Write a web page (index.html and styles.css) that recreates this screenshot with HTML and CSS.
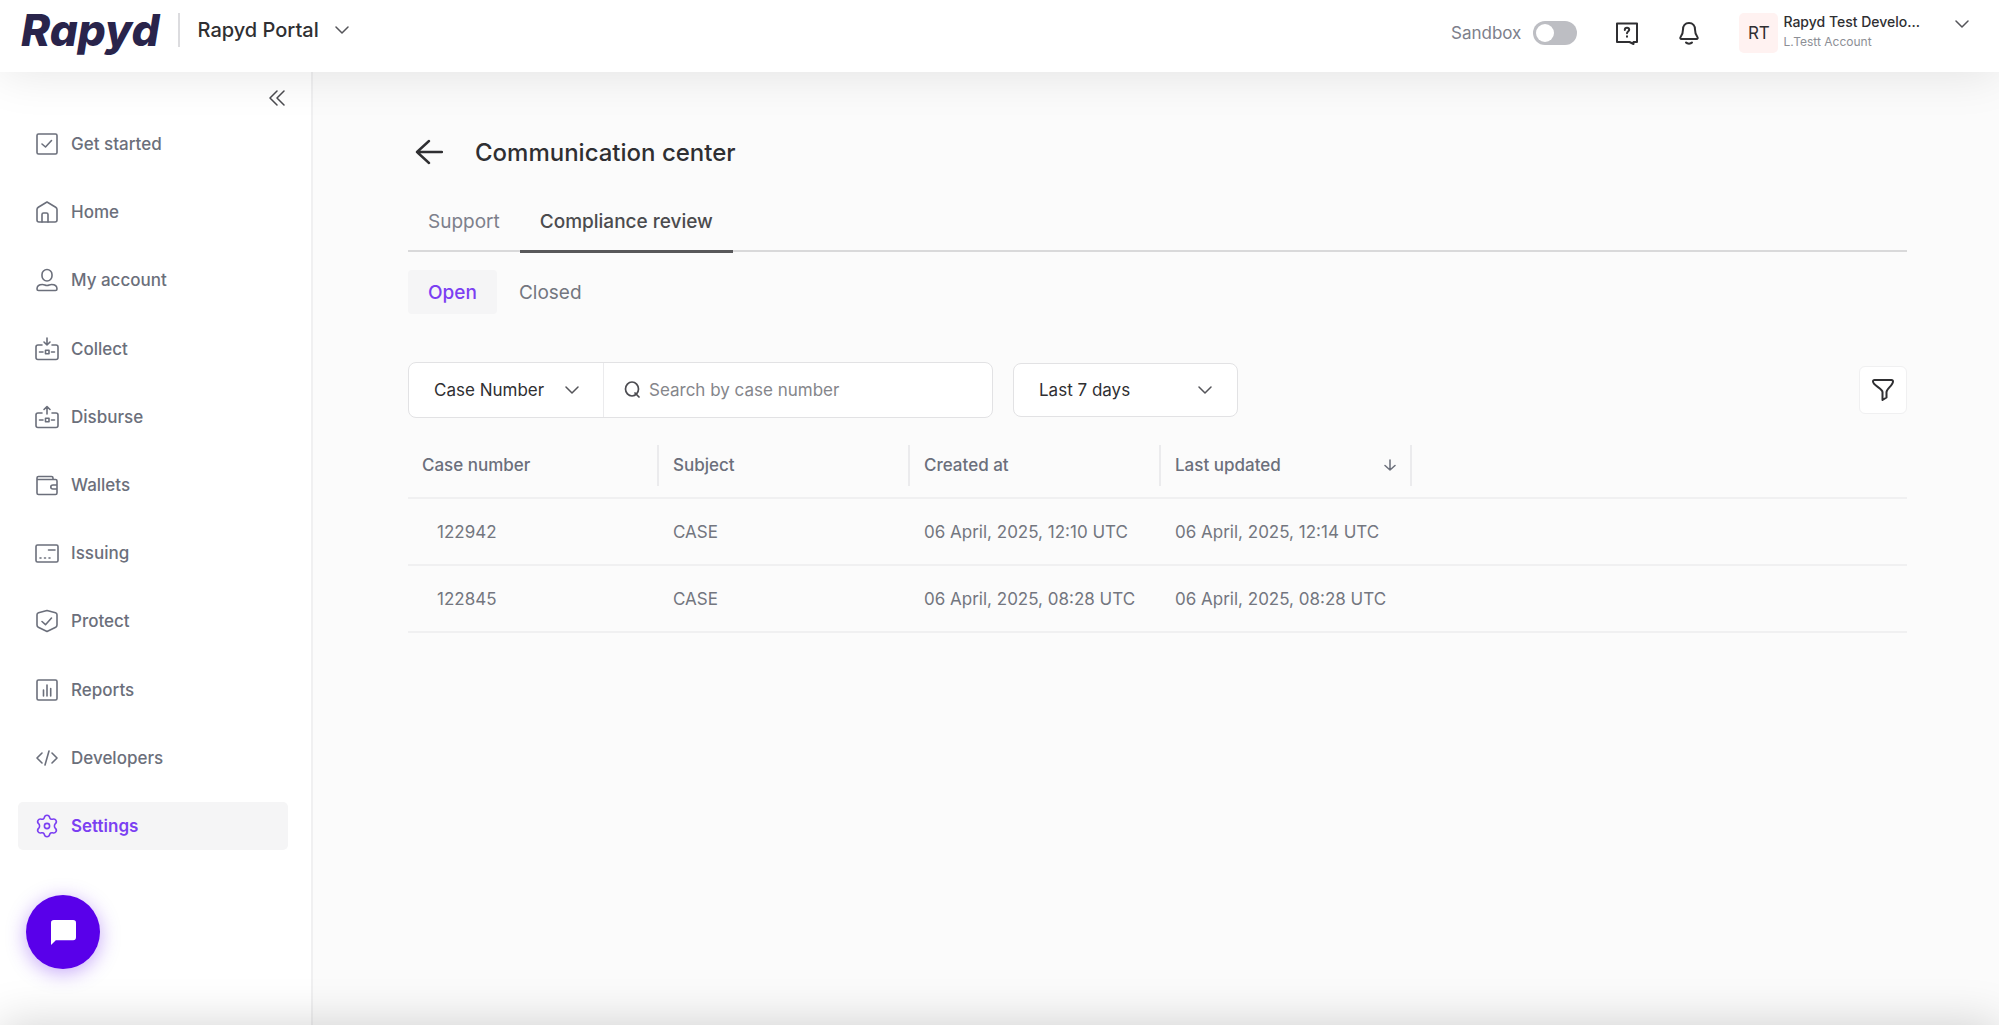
FILE: index.html
```
<!DOCTYPE html>
<html lang="en">
<head>
  <meta charset="UTF-8" />
  <meta name="viewport" content="width=device-width, initial-scale=1.0"/>
  <title>Rapyd Portal - Communication center</title>
  <link rel="stylesheet" href="styles.css">
</head>

<body>
  <header class="topbar">
    <a class="logo" href="#">Rapyd</a>
    <button class="portal" type="button">
      Rapyd Portal
      <svg class="chevron" viewBox="0 0 14 8"><path d="M1 1l6 6 6-6"/></svg>
    </button>

    <div class="tools">
      <label class="sandbox">Sandbox <input class="switch" type="checkbox" role="switch"></label>
      <button class="tool" type="button" aria-label="Help">
        <svg class="icon" viewBox="0 0 24 24"><path d="M2 2.500h20v18.500h-3.500v2l-4-2H2z"/><path d="M9.800 9c0-1.500 1-2.200 2.200-2.200s2.200.8 2.200 2c0 1.600-2.200 1.700-2.200 3.400M12 15.200v.6"/></svg>
      </button>
      <button class="tool" type="button" aria-label="Notifications">
        <svg class="icon" viewBox="0 0 24 24"><path d="M12 2c-4 0-6 3-6 6.500 0 4-.8 5.500-2.400 7.500-.7 1-.3 2 .9 2h15c1.200 0 1.600-1 .9-2C18.800 14 18 12.500 18 8.500 18 5 16 2 12 2z"/><path d="M9 21.500c1.300 1.500 4.700 1.500 6 0"/></svg>
      </button>
      <button class="account" type="button">
        <span class="avatar">RT</span>
        <span class="who">
          <span class="name">Rapyd Test Develo...</span>
          <span class="org">L.Testt Account</span>
        </span>
        <svg class="chevron" viewBox="0 0 14 8"><path d="M1 1l6 6 6-6"/></svg>
      </button>
    </div>
  </header>

  <div class="layout">
    <aside class="sidebar">
      <button class="collapse" type="button" aria-label="Collapse menu">
        <svg viewBox="0 0 16 16"><path d="M8 1L1 8l7 7M15 1L8 8l7 7"/></svg>
      </button>
      <nav class="menu">
        <a href="#"><svg class="icon" viewBox="0 0 24 24"><rect x="2" y="2" width="20" height="20" rx="1.500"/><path d="M7 12l3.500 3L16.500 8.500"/></svg>Get started</a>
        <a href="#"><svg class="icon" viewBox="0 0 24 24"><path d="M2 9.500c0-1 .5-1.800 1.300-2.300L12 2l8.700 5.200c.8.500 1.300 1.300 1.300 2.300V20c0 1.200-.8 2-2 2H4c-1.200 0-2-.8-2-2z"/><path d="M7 22v-7.500c0-1 .5-1.500 1.500-1.500h3c1 0 1.500.5 1.500 1.500V22"/></svg>Home</a>
        <a href="#"><svg class="icon" viewBox="0 0 24 24"><rect x="7" y="1.500" width="10" height="11.500" rx="5"/><path d="M3.500 22.500c-1 0-1.500-.6-1.500-1.500 0-3 2.500-4.500 5.500-4.500 2 0 2.500 1 4.500 1s2.500-1 4.500-1c3 0 5.500 1.500 5.500 4.500 0 .9-.5 1.500-1.500 1.500z"/></svg>My account</a>
        <a href="#"><svg class="icon" viewBox="0 0 24 24"><path d="M7 8H3c-1 0-2 .8-2 2v10.500c0 1.200 1 2 2 2h18c1 0 2-.8 2-2V10c0-1.200-1-2-2-2h-4M12 1v7M9 5l3 3 3-3M4.500 15h3.500M16.500 15h3"/><rect x="10.500" y="13.200" width="3.500" height="3.500"/></svg>Collect</a>
        <a href="#"><svg class="icon" viewBox="0 0 24 24"><path d="M7 8H3c-1 0-2 .8-2 2v10.500c0 1.200 1 2 2 2h18c1 0 2-.8 2-2V10c0-1.200-1-2-2-2h-4M12 9V1.500M9 4.500l3-3 3 3M4.500 15h3.500M16.500 15h3"/><rect x="10.500" y="13.200" width="3.500" height="3.500"/></svg>Disburse</a>
        <a href="#"><svg class="icon" viewBox="0 0 24 24"><path d="M2 6.500V20c0 1 .6 1.500 1.500 1.500h17c.9 0 1.500-.5 1.500-1.500V8c0-1-.6-1.500-1.500-1.500zM2 6.500V5c0-1 .6-1.500 1.500-1.500h13c1 0 1.500.5 1.500 1.500v1.500M22 12h-4c-1.500 0-2.200.8-2.200 2s.7 2 2.200 2h4"/></svg>Wallets</a>
        <a href="#"><svg class="icon" viewBox="0 0 24 24"><rect x="1" y="4" width="22" height="17" rx="1.500"/><path d="M13.500 9H20M5 17h1M9.500 17h1M14 17h1"/></svg>Issuing</a>
        <a href="#"><svg class="icon" viewBox="0 0 24 24"><path d="M12 1.500l8.500 2.300c1 .3 1.500 1 1.500 2V16c0 1-.5 1.700-1.300 2.200L12 22.500l-8.700-4.300C2.500 17.700 2 17 2 16V5.800c0-1 .5-1.700 1.500-2z"/><path d="M7 12.500l3.500 3.200 6-6.700"/></svg>Protect</a>
        <a href="#"><svg class="icon" viewBox="0 0 24 24"><rect x="2" y="2" width="20" height="20" rx="1.500"/><path d="M8.500 18v-6M12 18V7M15.700 18v-7.500"/></svg>Reports</a>
        <a href="#"><svg class="icon" viewBox="0 0 24 24"><path d="M7 7l-5 5 5 5M17 7l5 5-5 5M14 5l-4 14"/></svg>Developers</a>
        <a class="active" href="#"><svg class="icon" viewBox="0 0 24 24"><circle cx="12" cy="12" r="2.600"/><path d="M9.300 3.600C9.600 2 10.600 1.200 12 1.200s2.400.8 2.700 2.400c.3 1.300 1.500 2 2.800 1.600 1.600-.5 2.800-.1 3.500 1.100s.4 2.500-.8 3.600c-1 .9-1 3.300 0 4.200 1.200 1.100 1.500 2.400.8 3.600s-1.900 1.600-3.500 1.100c-1.300-.4-2.500.3-2.800 1.600-.3 1.600-1.300 2.400-2.700 2.400s-2.400-.8-2.700-2.400c-.3-1.300-1.500-2-2.800-1.600-1.600.5-2.800.1-3.500-1.100s-.4-2.500.8-3.600c1-.9 1-3.300 0-4.200C2.600 8.800 2.300 7.500 3 6.300s1.900-1.600 3.500-1.100c1.300.4 2.500-.3 2.800-1.600z"/></svg>Settings</a>
      </nav>
      <button class="chat" type="button" aria-label="Open chat">
        <svg viewBox="0 0 26 26"><path d="M3 0h20q3 0 3 3v15q0 3-3 3H5l-5 5V3q0-3 3-3z"/></svg>
      </button>
    </aside>

    <main class="content">
      <div class="title">
        <button class="back" type="button" aria-label="Back">
          <svg viewBox="0 0 28 26"><path d="M14 2L2 13l12 11M2 13h25"/></svg>
        </button>
        <h1>Communication center</h1>
      </div>

      <nav class="tabs">
        <a href="#">Support</a>
        <a class="current" href="#">Compliance review</a>
      </nav>
      <div class="states">
        <button class="selected" type="button">Open</button>
        <button type="button">Closed</button>
      </div>

      <form class="filters">
        <div class="search">
          <select class="field" aria-label="Search field"><option>Case Number</option></select>
          <svg class="chevron" viewBox="0 0 14 8"><path d="M1 1l6 6 6-6"/></svg>
          <label class="query">
            <svg viewBox="0 0 16 18"><ellipse cx="8" cy="8" rx="6.500" ry="7"/><path d="M11 12l4 4"/></svg>
            <input type="search" placeholder="Search by case number" aria-label="Search by case number">
          </label>
        </div>
        <div class="period">
          <select aria-label="Period"><option>Last 7 days</option></select>
          <svg class="chevron" viewBox="0 0 14 8"><path d="M1 1l6 6 6-6"/></svg>
        </div>
        <button class="filter" type="button" aria-label="Filter">
          <svg class="icon" viewBox="0 0 24 24"><path d="M3.500 2h17c1 0 1.500.7 1.500 1.500 0 4-6.500 7-6.500 10.500v5.500L11.500 22v-8C11.500 10.500 2 7.500 2 3.500 2 2.700 2.500 2 3.500 2z"/></svg>
        </button>
      </form>

      <table class="cases">
        <thead>
          <tr>
            <th><div>Case number</div></th>
            <th><div>Subject</div></th>
            <th><div>Created at</div></th>
            <th><div>Last updated <svg class="sort" viewBox="0 0 12 12"><path d="M6 1v10M1 6.500L6 11l5-4.500"/></svg></div></th>
            <td></td>
          </tr>
        </thead>
        <tbody>
          <tr>
            <td>122942</td>
            <td>CASE</td>
            <td>06 April, 2025, 12:10 UTC</td>
            <td>06 April, 2025, 12:14 UTC</td>
            <td></td>
          </tr>
          <tr>
            <td>122845</td>
            <td>CASE</td>
            <td>06 April, 2025, 08:28 UTC</td>
            <td>06 April, 2025, 08:28 UTC</td>
            <td></td>
          </tr>
        </tbody>
      </table>
    </main>
  </div>
</body>
</html>
```

FILE: styles.css
```
:root {
  --bg: #fbfbfb;
  --txt: #2f2f32;
  --muted: #6b6f7b;
  --line: #ebebed;
  --purple: #7b3ff2;
}

* { box-sizing: border-box; }

body {
  margin: 0;
  min-height: 100vh;
  display: flex;
  flex-direction: column;
  background: var(--bg);
  color: var(--txt);
  font-family: Inter, "Liberation Sans", sans-serif;
  font-size: 17px;
}

/* soft shadow along the bottom edge of the window */
body::after {
  content: "";
  position: fixed;
  left: 0;
  right: 0;
  bottom: -60px;
  height: 60px;
  box-shadow: 0 0 48px rgba(0, 0, 0, .18);
  pointer-events: none;
}

button, input, select {
  font: inherit;
  color: inherit;
  background: none;
  border: none;
  padding: 0;
}

button { cursor: pointer; }
a { color: inherit; text-decoration: none; }

svg {
  flex: none;
  fill: none;
  stroke: currentColor;
  stroke-width: 2;
  stroke-linejoin: round;
  stroke-linecap: round;
}

.icon { width: 24px; height: 24px; }

.chevron {
  width: 14px;
  height: 8px;
  color: #55555a;
  stroke-width: 1.5;
}

/* top bar */
.topbar {
  position: relative;
  z-index: 1;
  display: flex;
  align-items: center;
  height: 72px;
  padding: 0 30px 12px 21px;
  background: #fff;
  box-shadow: 0 2px 48px rgba(0, 0, 0, .1);
}

.logo {
  color: #29244b;
  font-size: 44px;
  font-weight: 800;
  font-style: italic;
  line-height: 60px;
}

.portal {
  display: flex;
  align-items: center;
  gap: 16px;
  height: 34px;
  margin-left: 18px;
  padding-left: 18px;
  border-left: 2px solid #dcdcdf;
  font-size: 20px;
  font-weight: 500;
}

.tools {
  display: flex;
  align-items: center;
  margin-left: auto;
  padding-top: 6px;
}

.sandbox {
  display: flex;
  align-items: center;
  gap: 12px;
  margin-right: 38px;
  color: #7d808b;
}

.switch {
  appearance: none;
  width: 44px;
  height: 24px;
  margin: 0;
  padding: 3px;
  border-radius: 12px;
  background: #bdbec3;
}

.switch::before {
  content: "";
  display: block;
  width: 18px;
  height: 18px;
  border-radius: 50%;
  background: #fff;
}

.tool {
  display: flex;
  margin-right: 38px;
}

.account {
  display: flex;
  align-items: center;
  gap: 5px;
  text-align: left;
}

.account .chevron { margin: 0 0 18px 30px; }

.avatar {
  display: grid;
  place-items: center;
  width: 39px;
  height: 40px;
  border-radius: 5px;
  background: #fff2f1;
}

.who {
  display: grid;
  gap: 4px;
  padding-bottom: 4px;
}

.name { font-size: 14px; font-weight: 500; }
.org { font-size: 12px; color: #8d8f96; }

/* side menu */
.layout {
  flex: 1;
  display: flex;
}

.sidebar {
  display: flex;
  flex-direction: column;
  width: 313px;
  padding: 18px 23px 56px 18px;
  background: #fff;
  border-right: 2px solid #f0f0f1;
}

.collapse {
  align-self: flex-end;
  display: flex;
  padding: 0 3px;
  color: #4b4b50;
}

.collapse svg { width: 16px; height: 16px; stroke-width: 1.5; }

.menu {
  flex: 1;
  display: flex;
  flex-direction: column;
  justify-content: space-between;
  margin-top: 14px;
  color: var(--muted);
  font-weight: 500;
}

.menu a {
  display: flex;
  align-items: center;
  gap: 12px;
  height: 48px;
  padding: 0 17px;
  border-radius: 5px;
}

.menu .active {
  background: #f5f5f6;
  color: var(--purple);
  font-weight: 600;
}

.menu svg { stroke-width: 1.6; }

.chat {
  display: grid;
  place-items: center;
  width: 74px;
  height: 74px;
  margin: 45px 0 0 8px;
  border-radius: 50%;
  background: #5900ea;
  box-shadow: 0 4px 20px rgba(89, 0, 234, .35);
}

.chat svg {
  width: 25px;
  height: 25px;
  fill: #fff;
  stroke: none;
}

/* page */
.content {
  flex: 1;
  padding: 60px 92px 0 95px;
}

.title {
  display: flex;
  align-items: center;
  gap: 32px;
  height: 40px;
  padding-left: 7px;
}

.back { display: flex; }
.back svg { width: 28px; height: 26px; stroke-width: 2.4; }

h1 {
  margin: 0;
  font-size: 24px;
  font-weight: 500;
}

.tabs {
  display: flex;
  margin-top: 20px;
  border-bottom: 2px solid #d9d9da;
  color: #7d808b;
  font-size: 19px;
}

.tabs a {
  height: 58px;
  padding: 0 20px;
  line-height: 60px;
}

/* underline covers the line under the tabs */
.tabs .current {
  height: 61px;
  margin-bottom: -3px;
  border-bottom: 3px solid #58585a;
  color: #4b4b4e;
  font-weight: 500;
}

.states {
  display: flex;
  gap: 2px;
  margin-top: 18px;
  color: #73767f;
  font-size: 19px;
}

.states button {
  height: 44px;
  padding: 0 20px;
  border-radius: 4px;
}

.states .selected {
  background: #f5f5f6;
  color: var(--purple);
  font-weight: 500;
}

.filters {
  display: flex;
  align-items: center;
  gap: 20px;
  margin-top: 48px;
}

.search, .period {
  display: flex;
  align-items: center;
  background: #fff;
  border: 1px solid #e2e2e4;
  border-radius: 8px;
}

.search { width: 585px; height: 56px; }
.period { width: 225px; height: 54px; }

select {
  appearance: none;
  height: 100%;
}

.field {
  width: 195px;
  padding-left: 25px;
  border-right: 1px solid var(--line);
}

.period select { width: 100%; padding-left: 25px; }

/* arrow sits over the right end of the select */
.filters .chevron {
  margin-left: -39px;
  margin-right: 25px;
  pointer-events: none;
}

.query {
  flex: 1;
  display: flex;
  align-items: center;
  gap: 9px;
  padding-left: 20px;
}

.query svg {
  width: 16px;
  height: 18px;
  color: #4b4b50;
  stroke-width: 1.7;
}

.query input { flex: 1; outline: none; }
.query input::placeholder { color: #85868b; }

.filter {
  display: grid;
  place-items: center;
  width: 48px;
  height: 48px;
  margin-left: auto;
  background: #fff;
  border: 1px solid #f0f0f1;
  border-radius: 6px;
}

.cases {
  width: 100%;
  margin-top: 15px;
  border-collapse: collapse;
  table-layout: fixed;
  color: #73767f;
}

.cases th {
  width: 251px;
  height: 65px;
  padding: 0;
  color: var(--muted);
  font-weight: 500;
  text-align: left;
}

.cases th div {
  display: flex;
  align-items: center;
  justify-content: space-between;
  height: 41px;
  padding: 0 14px;
  border-right: 2px solid var(--line);
}

.cases tr { border-bottom: 2px solid #f0f0f1; }

.cases td {
  height: 67px;
  padding: 0 14px;
}

.cases thead td { height: 65px; }
.cases td:first-child { padding-left: 29px; }
.sort { width: 12px; height: 12px; stroke-width: 1.5; }
```
